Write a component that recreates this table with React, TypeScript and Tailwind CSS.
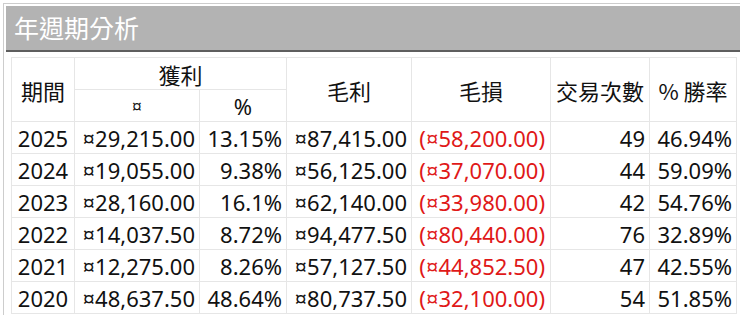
import React from "react";

const rows = [
  ["2025", "¤29,215.00", "13.15%", "¤87,415.00", "(¤58,200.00)", "49", "46.94%"],
  ["2024", "¤19,055.00", "9.38%", "¤56,125.00", "(¤37,070.00)", "44", "59.09%"],
  ["2023", "¤28,160.00", "16.1%", "¤62,140.00", "(¤33,980.00)", "42", "54.76%"],
  ["2022", "¤14,037.50", "8.72%", "¤94,477.50", "(¤80,440.00)", "76", "32.89%"],
  ["2021", "¤12,275.00", "8.26%", "¤57,127.50", "(¤44,852.50)", "47", "42.55%"],
  ["2020", "¤48,637.50", "48.64%", "¤80,737.50", "(¤32,100.00)", "54", "51.85%"],
];

function Head({ children, span }: { children: React.ReactNode; span: string }) {
  return (
    <div className={span + " bg-white flex items-center justify-center font-['Noto_Sans_CJK_TC',sans-serif]"}>
      {children}
    </div>
  );
}

export default function App() {
  return (
    <div className="w-[740px] h-[315px] bg-white overflow-hidden font-['Noto_Sans','Noto_Sans_CJK_TC',sans-serif]">
      <div className="ml-[3px] mt-[3px] h-[312px] border-l border-t border-[#cdcdcd] pl-[2px] pt-[2px]">
        <div className="h-[46px] bg-[#b3b3b3] border-b-2 border-[#5e5e5e] flex items-center pl-[8px] text-white text-[25px] leading-none font-['Noto_Sans_CJK_TC',sans-serif]">
          <span className="mt-[-2px]">年週期分析</span>
        </div>
        <div className="ml-[5px] mt-[5px] w-[726px] grid grid-cols-[62px_124px_86px_124px_138px_98px_86px] auto-rows-[31px] gap-px p-px bg-[#e6e6e6] text-[22px] leading-none text-[#111]">
          <Head span="row-span-2">期間</Head>
          <Head span="col-span-2">獲利</Head>
          <Head span="row-span-2">毛利</Head>
          <Head span="row-span-2">毛損</Head>
          <Head span="row-span-2">交易次數</Head>
          <Head span="row-span-2">% 勝率</Head>
          <div className="bg-white flex items-center justify-center text-[18px]">¤</div>
          <div className="bg-white flex items-center justify-center">%</div>
          {rows.map((r) =>
            r.map((c, i) => (
              <div
                key={r[0] + i}
                className={
                  "bg-white flex items-center " +
                  (i === 0
                    ? "justify-center"
                    : i === 4
                    ? "justify-end pr-[5px] text-[#e01818]"
                    : "justify-end pr-[4px]")
                }
              >
                {c}
              </div>
            ))
          )}
        </div>
      </div>
    </div>
  );
}
